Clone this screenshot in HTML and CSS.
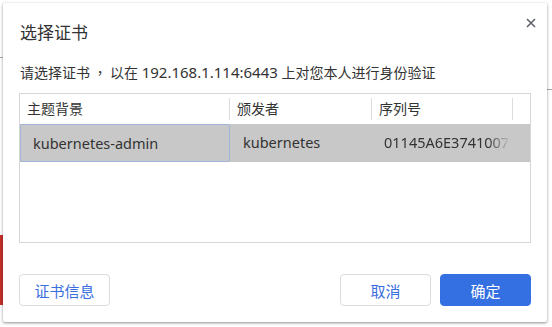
FILE: index.html
```html
<!DOCTYPE html>
<html lang="zh-CN">
<head>
    <meta charset="UTF-8">
    <title>选择证书</title>
    <link rel="stylesheet" href="styles.css">
</head>
<body>
    <div class="backdrop-line"></div>
    <div class="backdrop-line right"></div>
    <div class="backdrop-mark"></div>
    <div class="dialog">
        <div class="dialog-head">
            <h1>选择证书</h1>
            <button class="close" aria-label="关闭">
                <svg width="10" height="10" viewBox="0 0 10 10"><path d="M1 1L9 9M9 1L1 9" stroke="#5f6368" stroke-width="1.6"/></svg>
            </button>
        </div>
        <p class="prompt">请选择证书<span class="comma">，</span>以在 <span class="host">192.168.1.114:6443</span> 上对您本人进行身份验证</p>
        <div class="cert-table">
            <div class="row head">
                <div class="cell c1">主题背景</div>
                <div class="cell c2">颁发者</div>
                <div class="cell c3">序列号</div>
                <div class="cell c4"></div>
            </div>
            <div class="row selected">
                <div class="cell c1 focus">kubernetes-admin</div>
                <div class="cell c2">kubernetes</div>
                <div class="cell c3 fade">01145A6E3741007</div>
                <div class="cell c4"></div>
            </div>
        </div>
        <div class="actions">
            <button class="btn">证书信息</button>
            <span class="spacer"></span>
            <button class="btn">取消</button>
            <button class="btn primary">确定</button>
        </div>
    </div>
</body>
</html>
```

FILE: styles.css
```css
* {
    margin: 0;
    padding: 0;
    box-sizing: border-box;
    font-family: 'Noto Sans', 'Noto Sans CJK SC', sans-serif;
}
body { background: #fff; padding: 3px 5px 5px 3px; position: relative; height: 327px; overflow: hidden; }
.backdrop-line { position: absolute; left: 0; top: 57px; width: 3px; height: 1px; background: #aaa; }
.backdrop-line.right { left: auto; right: 0; top: 89px; width: 5px; }
.backdrop-mark { position: absolute; left: 0; top: 235px; width: 3px; height: 70px; background: #c8302b; }
.dialog {
    position: relative;
    width: 544px; height: 319px;
    background: #fff; border-radius: 2px;
    box-shadow: 0 1px 3px rgba(0,0,0,0.45);
    padding: 0 16px 16px;
    display: flex; flex-direction: column;
}
.dialog-head { display: flex; justify-content: space-between; align-items: flex-start; height: 50px; padding-top: 18px; }
.dialog-head h1 { font-size: 17px; font-weight: normal; color: #333; line-height: 24px; padding-left: 1px; }
.close { border: none; background: none; margin: -8px -10px 0 0; width: 20px; height: 20px; display: flex; align-items: center; justify-content: center; }
.prompt { font-size: 14px; color: #333; line-height: 20px; padding: 9px 0 10px 1px; white-space: nowrap; }
.comma { font-family: 'Noto Sans CJK TC', sans-serif; display: inline-block; width: 20px; text-align: center; }
.host { font-size: 15px; }
.cert-table { border: 1px solid #d6d6d6; height: 150px; }
.row { display: flex; }
.row.head { height: 30px; align-items: center; }
.cell { font-size: 14px; color: #333; white-space: nowrap; overflow: hidden; }
.head .cell { line-height: 22px; padding-left: 7px; border-right: 1px solid #dcdcdc; }
.c1 { width: 210px; }
.c2 { width: 142px; }
.c3 { width: 141px; }
.c4 { flex: 1; }
.head .c4 { border-right: none; }
.row.selected { height: 38px; background: #c8c8c8; }
.selected .cell { font-size: 14.5px; line-height: 36px; padding-left: 12px; }
.selected .c1 { border: 1px solid #9fb4d6; border-radius: 2px; }
.selected .c2 { padding-left: 13px; }
.fade { -webkit-mask-image: linear-gradient(to right, #000 82%, transparent 98%); mask-image: linear-gradient(to right, #000 82%, transparent 98%); }
.actions { display: flex; gap: 9px; margin-top: auto; }
.spacer { flex: 1; }
.btn {
    width: 91px; height: 32px;
    border: 1px solid #dadce0; border-radius: 4px; background: #fff;
    color: #3a6ee0; font-size: 15px;
}
.btn.primary { background: #3570e2; border-color: #3570e2; color: #fff; }
```
